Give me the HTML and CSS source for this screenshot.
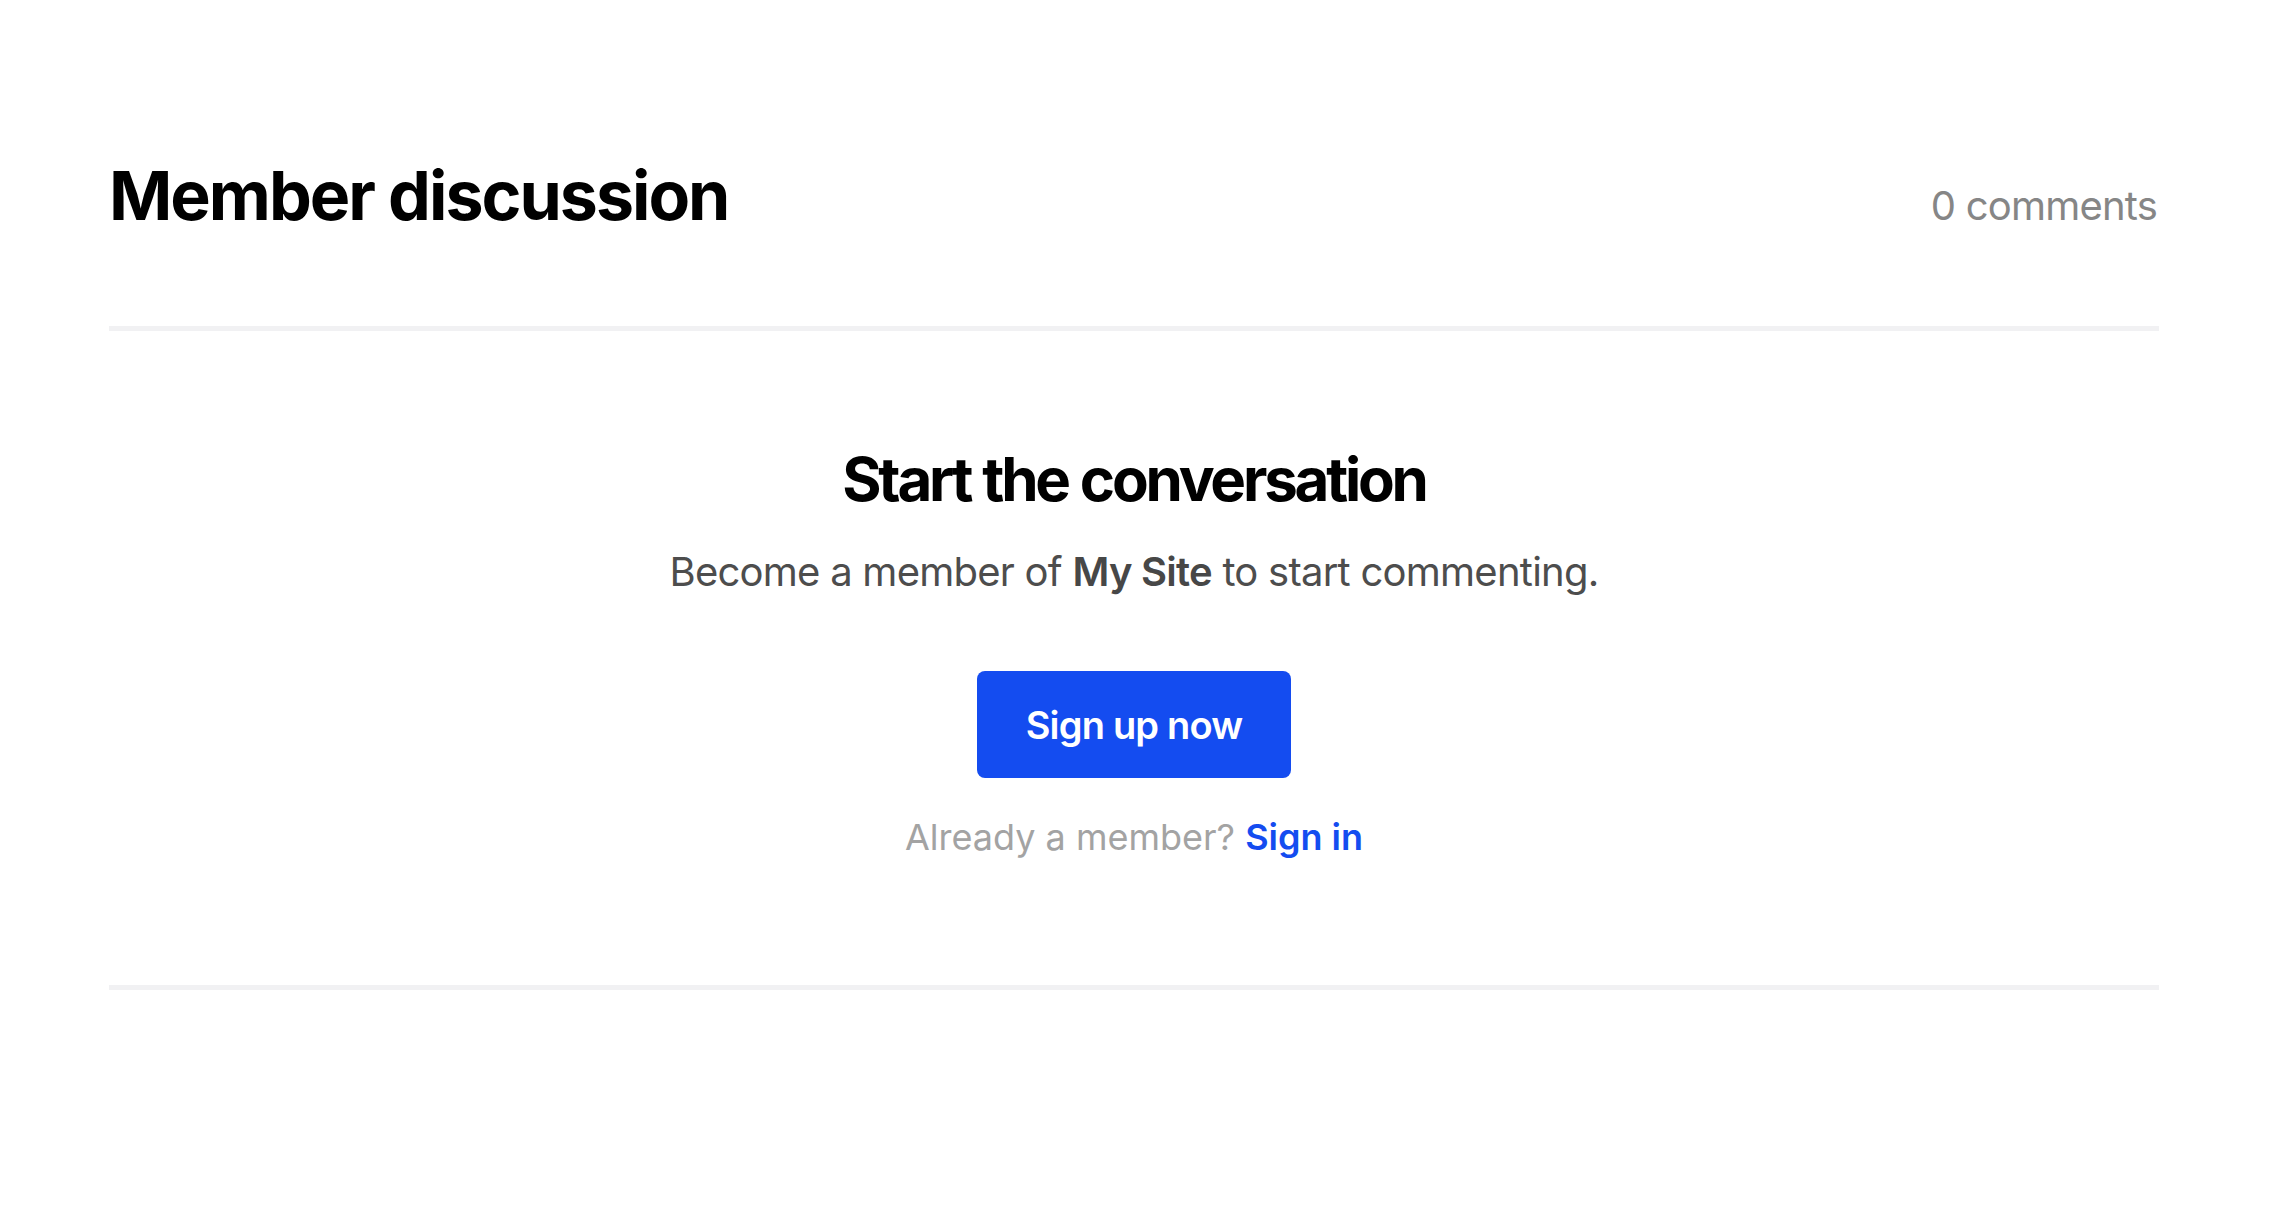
FILE: index.html
```html
<!DOCTYPE html>
<html lang="en">
<head>
<meta charset="utf-8">
<title>Member discussion</title>
<link rel="stylesheet" href="styles.css">
</head>
<body>
<section class="comments">
  <header class="comments-header">
    <h2 class="comments-title">Member discussion</h2>
    <span class="comments-count">0 comments</span>
  </header>
  <div class="cta">
    <h3 class="cta-title">Start the conversation</h3>
    <p class="cta-text">Become a member of <strong>My Site</strong> to start commenting.</p>
    <button class="cta-button" type="button">Sign up now</button>
    <p class="cta-signin">Already a member? <a class="signin-link" href="#">Sign in</a></p>
  </div>
</section>
</body>
</html>
```

FILE: styles.css
```css
html, body {
  margin: 0;
  padding: 0;
  background: #ffffff;
}
body {
  font-family: Inter, "Noto Sans", "Liberation Sans", sans-serif;
  color: #000;
}
.comments {
  margin: 0 115px 0 109px;
  padding-top: 155px;
}
.comments-header {
  display: flex;
  justify-content: space-between;
  align-items: baseline;
  padding-bottom: 91px;
  border-bottom: 5px solid #f1f1f3;
}
.comments-title {
  margin: 0;
  font-size: 68px;
  line-height: 80px;
  font-weight: 700;
  letter-spacing: -2px;
}
.comments-count {
  font-size: 40px;
  line-height: 48px;
  color: #868686;
  letter-spacing: -0.8px;
  margin-right: 2px;
}
.cta {
  display: flex;
  flex-direction: column;
  align-items: center;
  padding: 111px 0 124px;
  border-bottom: 5px solid #f1f1f3;
}
.cta-title {
  margin: 0;
  font-size: 60px;
  line-height: 75px;
  font-weight: 700;
  letter-spacing: -3.2px;
  word-spacing: 1px;
}
.cta-text {
  margin: 25px 0 0;
  font-size: 40px;
  line-height: 60px;
  color: #4d4d4d;
  letter-spacing: -0.75px;
}
.cta-text strong {
  font-weight: 600;
  color: #474747;
}
.cta-button {
  margin-top: 69px;
  height: 107px;
  padding: 0 49px;
  border: 0;
  border-radius: 8px;
  background: #144cf0;
  color: #fff;
  font-family: inherit;
  font-size: 38px;
  font-weight: 600;
  letter-spacing: -0.8px;
  cursor: pointer;
}
.cta-signin {
  margin: 35px 0 0;
  font-size: 36px;
  line-height: 48px;
  color: #a3a3a3;
}
.signin-link {
  color: #144cf0;
  font-weight: 600;
  text-decoration: none;
}
```
